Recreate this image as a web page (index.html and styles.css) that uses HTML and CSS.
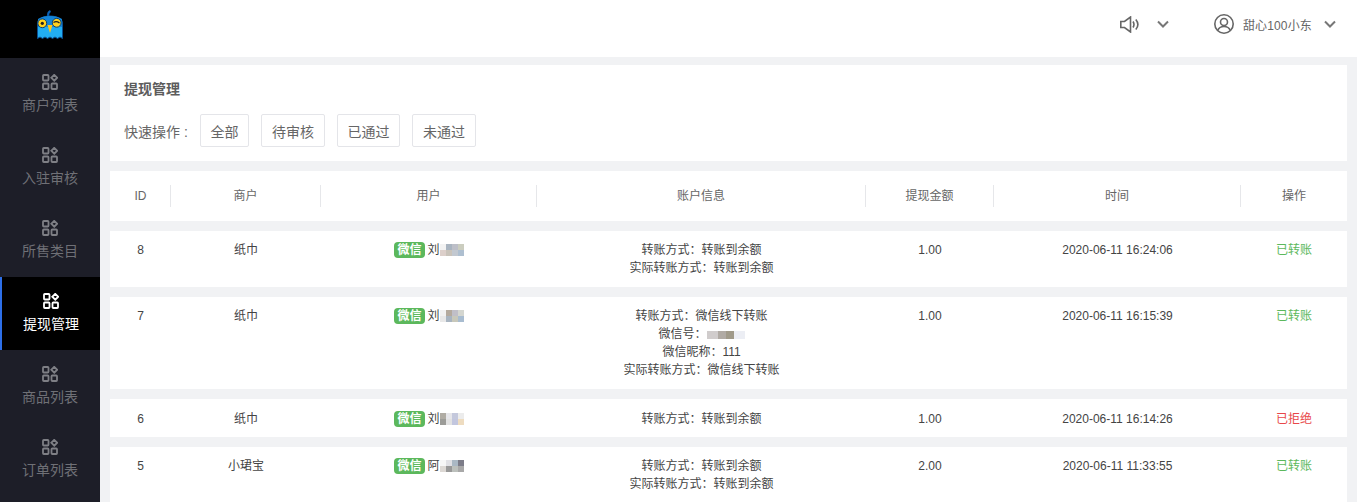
FILE: index.html
```html
<!DOCTYPE html>
<html lang="zh">
<head>
<meta charset="utf-8">
<title>提现管理</title>
<link rel="stylesheet" href="styles.css">
</head>
<body>
<div class="app">
  <aside class="sidebar">
    <div class="logo">
      <svg width="30" height="30" viewBox="0 0 30 30">
        <path d="M13.500 7C12.800 4.500 13.500 2 15.500 1" fill="none" stroke="#0d62b5" stroke-width="2.200"/>
        <path d="M2.500 13C2.500 9 8 6 15 6S27.500 9 27.500 13V28.500L25 27 22.500 28.500 20 27 17.500 28.500 15 27 12.500 28.500 10 27 7.500 28.500 5 27 2.500 28.500Z" fill="#22aef2" stroke="#0a4f92" stroke-width="1"/>
        <path d="M3 9C6 7 10 6 15 6S24 7 27 9V17H3Z" fill="#1485d8"/>
        <circle cx="7.300" cy="13.300" r="4.400" fill="#ffd21f" stroke="#0a3f72"/>
        <circle cx="21.700" cy="12.800" r="4.400" fill="#ffd21f" stroke="#0a3f72"/>
        <circle cx="7.300" cy="13.300" r="1.600" fill="#222"/>
        <path d="M18.500 12.500C20 11.500 22.500 11.500 24.500 13" fill="none" stroke="#222" stroke-width="1.300"/>
        <path d="M12.500 15H17.500L15 23Z" fill="#ffc61a"/>
      </svg>
    </div>
    <nav class="menu">
      <a class="menu-item"><svg class="menu-icon" viewBox="0 0 16 16"><use href="#apps"/></svg><span>商户列表</span></a>
      <a class="menu-item"><svg class="menu-icon" viewBox="0 0 16 16"><use href="#apps"/></svg><span>入驻审核</span></a>
      <a class="menu-item"><svg class="menu-icon" viewBox="0 0 16 16"><use href="#apps"/></svg><span>所售类目</span></a>
      <a class="menu-item active"><svg class="menu-icon" viewBox="0 0 16 16"><use href="#apps"/></svg><span>提现管理</span></a>
      <a class="menu-item"><svg class="menu-icon" viewBox="0 0 16 16"><use href="#apps"/></svg><span>商品列表</span></a>
      <a class="menu-item"><svg class="menu-icon" viewBox="0 0 16 16"><use href="#apps"/></svg><span>订单列表</span></a>
    </nav>
  </aside>
  <div class="main">
    <header class="topbar">
      <div class="top-group sound">
        <svg class="sound-icon" width="20" height="17" viewBox="0 0 20 17" fill="none" stroke="#666" stroke-width="1.600"><path d="M.8 5.500H4.500L10.500 1V16L4.500 11.500H.8Z"/><path d="M13 5.500C14.300 7.500 14.300 9.500 13 11.500M15.800 3.500C18.300 6.500 18.300 10.500 15.800 13.500"/></svg>
        <svg class="chev" width="12" height="8" viewBox="0 0 12 8" fill="none" stroke="#777" stroke-width="2"><path d="M1 1.500L6 6.500L11 1.500"/></svg>
      </div>
      <div class="top-group user">
        <svg width="20" height="20" viewBox="0 0 20 20" fill="none" stroke="#666" stroke-width="1.600"><circle cx="10" cy="10" r="9.200"/><circle cx="10" cy="8" r="3.500"/><path d="M3.800 16.500C4.800 13.500 7 12.500 10 12.500S15.200 13.500 16.200 16.500"/></svg>
        <span class="user-name">甜心100小东</span>
        <svg class="chev" width="12" height="8" viewBox="0 0 12 8" fill="none" stroke="#777" stroke-width="2"><path d="M1 1.500L6 6.500L11 1.500"/></svg>
      </div>
    </header>
    <section class="filter-card">
      <h1 class="page-title">提现管理</h1>
      <div class="quick">
        <span class="quick-label">快速操作 :</span>
        <button class="quick-btn">全部</button>
        <button class="quick-btn">待审核</button>
        <button class="quick-btn">已通过</button>
        <button class="quick-btn">未通过</button>
      </div>
    </section>
    <div class="row head">
      <div class="c id"><span>ID</span></div>
      <div class="c shop"><span>商户</span></div>
      <div class="c usr"><span>用户</span></div>
      <div class="c acct"><span>账户信息</span></div>
      <div class="c amt"><span>提现金额</span></div>
      <div class="c time"><span>时间</span></div>
      <div class="c op"><span>操作</span></div>
    </div>
    <div class="row r1">
      <div class="c id">8</div><div class="c shop">纸巾</div>
      <div class="c usr"><span class="tag">微信</span><span class="name">刘<i class="mosaic m1"></i></span></div>
      <div class="c acct"><p>转账方式：转账到余额</p><p>实际转账方式：转账到余额</p></div>
      <div class="c amt">1.00</div><div class="c time">2020-06-11 16:24:06</div><div class="c op ok">已转账</div>
    </div>
    <div class="row r2">
      <div class="c id">7</div><div class="c shop">纸巾</div>
      <div class="c usr"><span class="tag">微信</span><span class="name">刘<i class="mosaic m2"></i></span></div>
      <div class="c acct"><p>转账方式：微信线下转账</p><p>微信号：<i class="mosaic wx"></i></p><p>微信昵称：111</p><p>实际转账方式：微信线下转账</p></div>
      <div class="c amt">1.00</div><div class="c time">2020-06-11 16:15:39</div><div class="c op ok">已转账</div>
    </div>
    <div class="row r3">
      <div class="c id">6</div><div class="c shop">纸巾</div>
      <div class="c usr"><span class="tag">微信</span><span class="name">刘<i class="mosaic m3"></i></span></div>
      <div class="c acct"><p>转账方式：转账到余额</p></div>
      <div class="c amt">1.00</div><div class="c time">2020-06-11 16:14:26</div><div class="c op no">已拒绝</div>
    </div>
    <div class="row r4">
      <div class="c id">5</div><div class="c shop">小珺宝</div>
      <div class="c usr"><span class="tag">微信</span><span class="name">阿<i class="mosaic m4"></i></span></div>
      <div class="c acct"><p>转账方式：转账到余额</p><p>实际转账方式：转账到余额</p></div>
      <div class="c amt">2.00</div><div class="c time">2020-06-11 11:33:55</div><div class="c op ok">已转账</div>
    </div>
  </div>
</div>
<svg class="defs" width="0" height="0"><defs><g id="apps" fill="none" stroke="currentColor" stroke-width="1.800"><rect x="1" y="1" width="5.500" height="5.500" rx=".8"/><rect x="1" y="9.500" width="5.500" height="5.500" rx=".8"/><rect x="9.500" y="9.500" width="5.500" height="5.500" rx=".8"/><path d="M12.250 .8L15.200 3.750 12.250 6.700 9.300 3.750Z"/></g></defs></svg>
</body>
</html>
```
FILE: styles.css
```css
* { box-sizing: border-box; }
html, body { margin: 0; height: 502px; overflow: hidden; }
body { font-family: "Liberation Sans", "Noto Sans CJK SC", sans-serif; font-size: 12px; color: #515a6e; background: #f1f2f4; }
.defs { position: absolute; }
.app { display: flex; height: 502px; overflow: hidden; }
.sidebar { flex: 0 0 100px; width: 100px; background: #1d1e28; }
.logo { height: 58px; background: #000; display: flex; justify-content: center; padding-top: 10px; }
.menu-item { display: flex; flex-direction: column; align-items: center; height: 73px; padding-top: 16px; color: #6f7076; font-size: 14px; line-height: 20px; }
.menu-icon { width: 16px; height: 16px; margin-bottom: 5px; color: #7e7f85; }
.menu-item.active { background: #000; color: #fff; border-left: 2px solid #2d6fe8; }
.menu-item.active .menu-icon { color: #fff; }
.main { flex: 1; min-width: 0; display: flex; flex-direction: column; gap: 10px; padding-bottom: 10px; }
.topbar { flex: 0 0 57px; background: #fff; display: flex; justify-content: flex-end; align-items: center; margin-bottom: -2px; padding: 0 21px 9px 0; }
.top-group { display: flex; align-items: center; }
.sound { margin-right: 45px; }
.sound-icon { margin-right: 17px; }
.user-name { margin: 0 12px 0 9px; color: #666; letter-spacing: .15px; }
.filter-card { flex: 0 0 96px; margin: 0 10px; background: #fff; padding: 16px 14px 14px; }
.page-title { margin: 0 0 17px; font-size: 14px; line-height: 16px; font-weight: 700; color: #5c5c5c; }
.quick { display: flex; align-items: center; gap: 12px; }
.quick-label { font-size: 14px; color: #666; }
.quick-btn { height: 33px; padding: 0 9.75px; border: 1px solid #e4e5e9; border-radius: 2px; background: #fff; font: inherit; font-size: 14px; color: #666; }
.row { flex: none; display: flex; margin: 0 10px; background: #fff; color: #444; text-align: center; }
.head { height: 50px; align-items: center; color: #666; }
.head .c { height: 22px; line-height: 22px; border-right: 1px solid #e6e7ea; }
.head .op { border-right: 0; }
.head .id span { margin-left: 1px; }
.c { flex: none; line-height: 18px; }
.id { width: 61px; }
.shop { width: 150px; }
.usr { width: 216px; }
.acct { width: 329px; }
.amt { width: 128px; }
.time { width: 247px; }
.op { width: 106px; }
.row p { margin: 0; }
.r1 { height: 56px; padding-top: 10px; }
.r2 { height: 92px; padding-top: 10px; }
.r3 { height: 38px; padding-top: 11px; }
.r4 { height: 60px; padding-top: 10px; }
.usr { display: flex; justify-content: center; align-items: center; height: 18px; }
.tag { background: #5cb85c; color: #fff; border-radius: 4px; font-size: 12px; font-weight: 700; line-height: 16px; padding: 0 3px; margin-right: 3px; }
.name { display: inline-flex; width: 36px; color: #444; font-size: 12px; }
.mosaic { display: inline-block; flex: none; background-repeat: no-repeat; background-size: 100% 50%; background-position: top, bottom; }
.m1, .m2, .m3, .m4 { width: 24px; height: 12px; margin-top: 3px; }
.m1 { background-image: linear-gradient(90deg, #f2f2f2 25%, #a9b4c0 25% 50%, #bdbfc8 50% 75%, #cbcdbf 75%), linear-gradient(90deg, #dccfca 25%, #c9c3ba 25% 50%, #c2c8d0 50% 75%, #aebfd0 75%); }
.m2 { background-image: linear-gradient(90deg, #f2f2f2 25%, #b4aa9e 25% 50%, #c0bfc8 50% 75%, #d4d6d0 75%), linear-gradient(90deg, #e8e8e8 25%, #a8b4c0 25% 50%, #c8c8ba 50% 75%, #a8bcd0 75%); }
.m3 { background-image: linear-gradient(90deg, #b0aca4 25%, #e6e6ea 25% 50%, #c4c8dc 50% 75%, #ececec 75%), linear-gradient(90deg, #9c9c98 25%, #e2e2e2 25% 50%, #c2c6de 50% 75%, #eedcc0 75%); }
.m4 { background-image: linear-gradient(90deg, #f6f6f6 25%, #e0e0e4 25% 50%, #aab8c4 50% 75%, #7c7c88 75%), linear-gradient(90deg, #dcd8d4 25%, #989898 25% 50%, #bcc0bc 50% 75%, #a8a8a8 75%); }
.wx { width: 38px; height: 8px; vertical-align: -1px; background-size: 100% 100%; background-position: 0 0; background-image: linear-gradient(90deg, #d0cccc 0 30%, #b0aaa4 30% 50%, #a09a8a 50% 72%, #eceef4 72%); }
.ok { color: #5cb85c; }
.no { color: #e8474a; }
```
